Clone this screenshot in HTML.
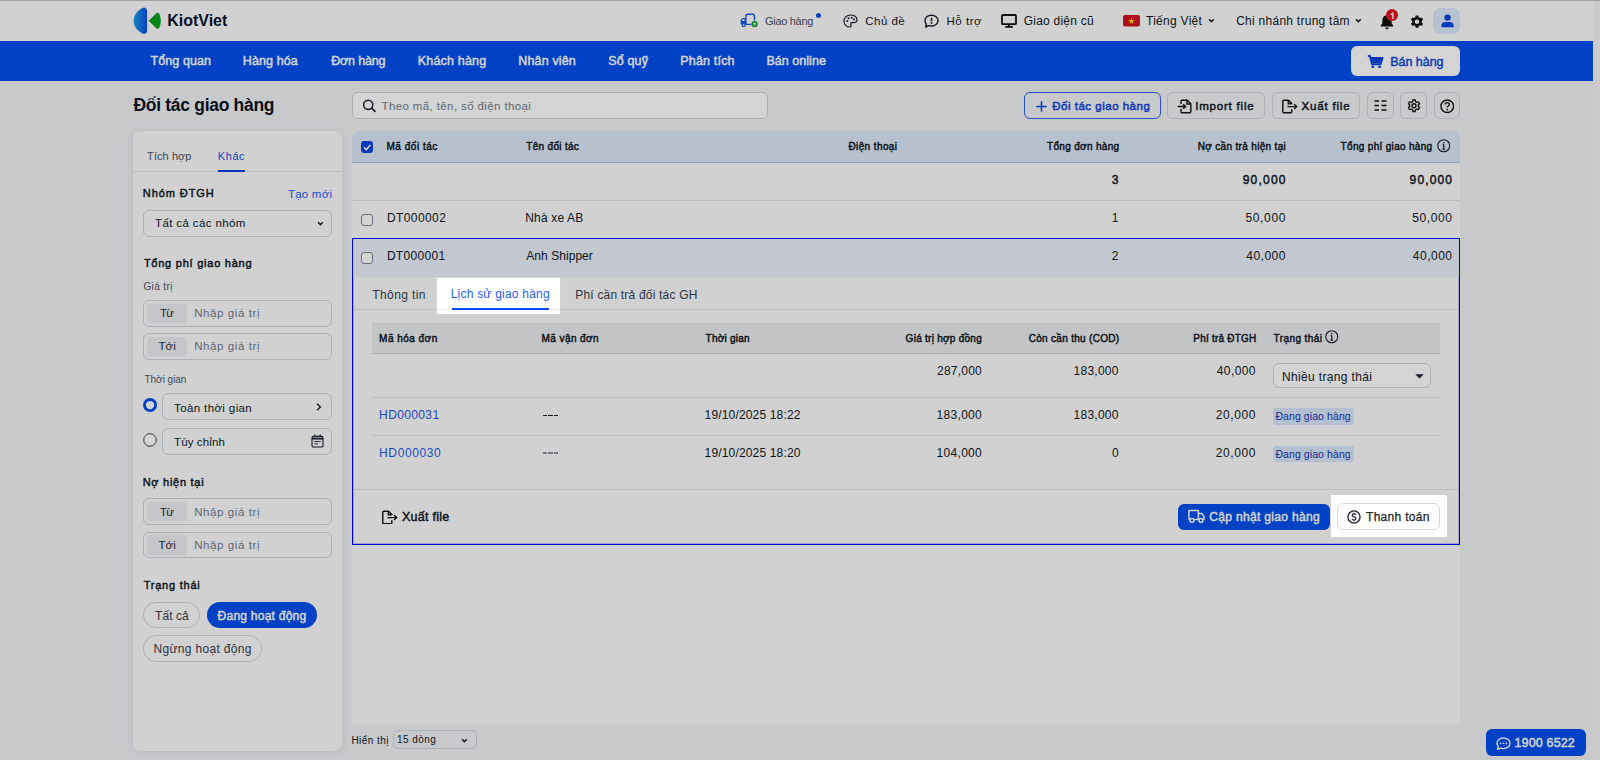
<!DOCTYPE html>
<html><head><meta charset="utf-8">
<style>
*{box-sizing:border-box;margin:0;padding:0}
html,body{width:1600px;height:760px;overflow:hidden}
body{font-family:"Liberation Sans",sans-serif;background:#f1f2f5;position:relative}
.a{position:absolute}
.t{white-space:nowrap;line-height:1}
.ov{position:absolute;left:0;top:0;width:1600px;height:760px;background:rgba(0,0,0,0.17);z-index:50}
.top{position:absolute;left:0;top:0;width:1600px;height:760px;z-index:60}
</style></head><body>
<div class="a" style="left:0px;top:0px;width:1593px;height:41px;background:#fcfcfc;border-top:1px solid #c3c5c3"></div><div class="a" style="left:1593px;top:0px;width:7px;height:760px;background:#f5f5f5"></div><div class="a" style="left:0px;top:41px;width:1593px;height:39.5px;background:#004fee"></div><svg class="a" style="left:133px;top:7px;" width="28" height="28" viewBox="0 0 28 28" fill="none"><defs><linearGradient id="lg" x1="0" y1="0" x2="1" y2="0"><stop offset="0" stop-color="#1fa3e6"/><stop offset="1" stop-color="#0a4fe6"/></linearGradient></defs>
<path d="M10.8,0.5 C13,0.5 14.1,2.2 14.1,4.6 L14.1,22.9 C14.1,25.3 13,27 10.8,27 C4.6,24.6 0.6,19.6 0.6,13.8 C0.6,8 4.6,2.9 10.8,0.5 Z" fill="url(#lg)"/>
<path d="M15.6,13.8 L23.2,6.4 C24.2,5.4 25.6,5.6 26.3,6.9 C27.4,9 27.8,11.4 27.8,13.8 C27.8,16.2 27.4,18.6 26.3,20.7 C25.6,22 24.2,22.2 23.2,21.2 Z" fill="#0aa01e"/></svg><svg class="a" style="left:736px;top:8px;" width="30" height="24" viewBox="0 0 30 24" fill="none"><path d="M9.9,16.4 L9.9,8.2 C9.9,6.9 10.6,6.3 11.8,6.3 L16.6,6.3 C17.8,6.3 18.5,6.9 18.5,8.2 L18.5,12.6 M9.9,16.4 L15.2,16.4" stroke="#1554e0" stroke-width="1.4" stroke-linejoin="round" fill="none"/>
<path d="M4.7,16.6 L4.7,12.3 L6.5,10.1 L9.9,10.1 L9.9,16.6 Z" fill="#1554e0"/><rect x="6.3" y="11.2" width="2.3" height="1.8" fill="#fff"/><circle cx="7.7" cy="17.2" r="1.5" stroke="#1554e0" stroke-width="1.2" fill="#fff"/>
<circle cx="18.6" cy="16.1" r="3.2" fill="#13a02e"/><path d="M17,15.3 L20.2,15.3 M17.3,16.9 L19.9,16.9" stroke="#fff" stroke-width="0.9"/></svg><svg class="a" style="left:816px;top:12.5px;" width="5" height="5" viewBox="0 0 5 5" fill="none"><circle cx="2.5" cy="2.5" r="2.5" fill="#0a4fe6"/></svg><svg class="a" style="left:843px;top:14px;" width="15" height="14" viewBox="0 0 15 14" fill="none"><path d="M7.5,1 C3.6,1 1,3.9 1,7.2 C1,10.4 3.6,13 6.8,13 C7.8,13 8.2,12.4 8.2,11.7 C8.2,11 7.6,10.6 7.6,9.9 C7.6,9.1 8.2,8.6 9,8.6 L10.6,8.6 C12.5,8.6 14,7.2 14,5.4 C14,2.9 11.2,1 7.5,1 Z" stroke="#1a1f2b" stroke-width="1.2"/>
<circle cx="4.3" cy="7" r="1" fill="#1a1f2b"/><circle cx="5.6" cy="4.2" r="1" fill="#1a1f2b"/><circle cx="8.8" cy="3.8" r="1" fill="#1a1f2b"/><circle cx="11" cy="5.6" r="1" fill="#1a1f2b"/></svg><svg class="a" style="left:924px;top:14px;" width="15" height="14" viewBox="0 0 15 14" fill="none"><path d="M7.5,1.2 C11.2,1.2 14,3.6 14,6.6 C14,9.6 11.2,12 7.5,12 C6.6,12 5.8,11.9 5,11.6 L1.6,13 L2.4,10.2 C1.5,9.2 1,8 1,6.6 C1,3.6 3.8,1.2 7.5,1.2 Z" stroke="#1a1f2b" stroke-width="1.4" stroke-linejoin="round"/>
<path d="M7.5,3.8 L7.5,7.2" stroke="#1a1f2b" stroke-width="1.5"/><circle cx="7.5" cy="9" r="0.9" fill="#1a1f2b"/></svg><svg class="a" style="left:1000.5px;top:14px;" width="16" height="14" viewBox="0 0 16 14" fill="none"><rect x="1" y="1" width="14" height="9.2" rx="1" stroke="#111" stroke-width="1.8"/><path d="M8,10.5 L8,12.3 M4.2,12.8 L11.8,12.8" stroke="#111" stroke-width="1.8"/></svg><svg class="a" style="left:1122.5px;top:15px;" width="17" height="11.5" viewBox="0 0 17 11.5" fill="none"><rect x="0" y="0" width="17" height="11.5" rx="2" fill="#d2141c"/><path d="M8.5,2.6 L9.3,5 L11.8,5 L9.8,6.5 L10.5,8.9 L8.5,7.4 L6.5,8.9 L7.2,6.5 L5.2,5 L7.7,5 Z" fill="#ffd800"/></svg><svg class="a" style="left:1207.8px;top:18.2px;" width="7" height="5" viewBox="0 0 7 5" fill="none"><path d="M1,1.2 L3.4,3.6 L5.8,1.2" stroke="#1a1f2b" stroke-width="1.5" fill="none"/></svg><svg class="a" style="left:1355px;top:18.2px;" width="7" height="5" viewBox="0 0 7 5" fill="none"><path d="M1,1.2 L3.4,3.6 L5.8,1.2" stroke="#1a1f2b" stroke-width="1.5" fill="none"/></svg><svg class="a" style="left:1379.5px;top:13.5px;" width="14" height="16" viewBox="0 0 14 16" fill="none"><path d="M7,1.2 C4.2,1.2 2.4,3.4 2.4,6 L2.4,9.2 L0.8,11.6 L0.8,12.6 L13.2,12.6 L13.2,11.6 L11.6,9.2 L11.6,6 C11.6,3.4 9.8,1.2 7,1.2 Z" fill="#111"/><path d="M5.2,13.6 C5.4,14.6 6.1,15.2 7,15.2 C7.9,15.2 8.6,14.6 8.8,13.6 Z" fill="#111"/></svg><svg class="a" style="left:1386px;top:9.2px;" width="12" height="12" viewBox="0 0 12 12" fill="none"><circle cx="6" cy="6" r="6" fill="#e3141e"/></svg><svg class="a" style="left:1390px;top:11.5px;" width="5" height="7.5" viewBox="0 0 5 7.5" fill="none"><path d="M0.6,2 L2.6,0.6 L3.6,0.6 L3.6,7.2 L2.2,7.2 L2.2,2.4 L0.6,3.2 Z" fill="#fff"/></svg><svg class="a" style="left:1409.5px;top:15.3px;" width="14" height="13" viewBox="0 0 14 13" fill="none"><path fill="#111" fill-rule="evenodd" d="M5.7,0.5 L8.3,0.5 L8.7,2.3 C9.2,2.5 9.6,2.7 10,3 L11.8,2.4 L13.1,4.6 L11.7,5.9 C11.8,6.4 11.8,6.9 11.7,7.4 L13.1,8.7 L11.8,10.9 L10,10.3 C9.6,10.6 9.2,10.8 8.7,11 L8.3,12.8 L5.7,12.8 L5.3,11 C4.8,10.8 4.4,10.6 4,10.3 L2.2,10.9 L0.9,8.7 L2.3,7.4 C2.2,6.9 2.2,6.4 2.3,5.9 L0.9,4.6 L2.2,2.4 L4,3 C4.4,2.7 4.8,2.5 5.3,2.3 Z M7,4.4 A2.25,2.25 0 1 0 7,8.9 A2.25,2.25 0 1 0 7,4.4 Z"/></svg><div class="a" style="left:1433px;top:7.5px;width:26.5px;height:26.5px;background:#dde9fb;border-radius:7px"></div><svg class="a" style="left:1440.5px;top:14px;" width="13" height="13.5" viewBox="0 0 13 13.5" fill="none"><circle cx="6.5" cy="3.6" r="3.2" fill="#0b45e0"/><path d="M0.4,13.3 L0.4,11.4 C0.4,9.4 2,7.9 4,7.9 L9,7.9 C11,7.9 12.6,9.4 12.6,11.4 L12.6,13.3 Z" fill="#0b45e0"/></svg><div class="a" style="left:1351px;top:46px;width:108.5px;height:29.6px;background:#fff;border-radius:6px"></div><svg class="a" style="left:1366.5px;top:54.5px;" width="17" height="13.5" viewBox="0 0 17 13.5" fill="none"><path d="M0.8,1 L3,1 L5,9.2 L13.6,9.2 L15.6,3 L3.8,3" stroke="#0b45e0" stroke-width="1.9" stroke-linejoin="round" fill="none"/><path d="M4.2,3 L14.6,3 L13.2,8.2 L5.4,8.2 Z" fill="#0b45e0"/><circle cx="5.9" cy="12" r="1.4" fill="#0b45e0"/><circle cx="12.6" cy="12" r="1.4" fill="#0b45e0"/></svg><div class="a" style="left:352.4px;top:92.2px;width:415.6px;height:26.4px;background:#fff;border:1px solid #cfd4dc;border-radius:6px"></div><svg class="a" style="left:361.5px;top:99px;" width="15" height="14" viewBox="0 0 15 14" fill="none"><circle cx="6.2" cy="5.8" r="4.6" stroke="#1a1f2b" stroke-width="1.5"/><path d="M9.6,9.2 L13,12.4" stroke="#1a1f2b" stroke-width="1.6" stroke-linecap="round"/></svg><div class="a" style="left:1024px;top:92.2px;width:137px;height:26.5px;border:1px solid #2f63ee;border-radius:6px"></div><svg class="a" style="left:1035.5px;top:100.5px;" width="11" height="11" viewBox="0 0 11 11" fill="none"><path d="M5.5,0.3 L5.5,10.7 M0.3,5.5 L10.7,5.5" stroke="#0a44f0" stroke-width="1.5"/></svg><div class="a" style="left:1167px;top:92.2px;width:97.5px;height:26.5px;border:1px solid #cfd4dc;border-radius:6px"></div><svg class="a" style="left:1176.8px;top:98.5px;" width="15" height="15" viewBox="0 0 15 15" fill="none"><path d="M4,5 L4,2.2 C4,1.6 4.4,1.2 5,1.2 L10.3,1.2 L13.8,4.7 L13.8,12.8 C13.8,13.4 13.4,13.8 12.8,13.8 L5,13.8 C4.4,13.8 4,13.4 4,12.8 L4,10" stroke="#111" stroke-width="1.4" stroke-linejoin="round"/><path d="M10,1.2 L10,5 L13.8,5" stroke="#111" stroke-width="1.4"/><path d="M0.8,7.5 L8.5,7.5 M6.2,5.2 L8.6,7.5 L6.2,9.8" stroke="#111" stroke-width="1.4"/></svg><div class="a" style="left:1272px;top:92.2px;width:87.5px;height:26.5px;border:1px solid #cfd4dc;border-radius:6px"></div><svg class="a" style="left:1282px;top:98.5px;" width="16" height="15" viewBox="0 0 16 15" fill="none"><path d="M9.8,10.3 L9.8,12.8 C9.8,13.4 9.4,13.8 8.8,13.8 L1.8,13.8 C1.2,13.8 0.8,13.4 0.8,12.8 L0.8,2.2 C0.8,1.6 1.2,1.2 1.8,1.2 L6.5,1.2 L9.8,4.5 L9.8,5" stroke="#111" stroke-width="1.4" stroke-linejoin="round"/><path d="M6.3,1.2 L6.3,4.8 L9.8,4.8" stroke="#111" stroke-width="1.4"/><path d="M5.5,7.6 L14.5,7.6 M12.2,5.3 L14.6,7.6 L12.2,9.9" stroke="#111" stroke-width="1.4"/></svg><div class="a" style="left:1367px;top:92.2px;width:26.5px;height:26.5px;border:1px solid #cfd4dc;border-radius:6px"></div><div class="a" style="left:1400.3px;top:92.2px;width:26.5px;height:26.5px;border:1px solid #cfd4dc;border-radius:6px"></div><div class="a" style="left:1433.5px;top:92.2px;width:26.5px;height:26.5px;border:1px solid #cfd4dc;border-radius:6px"></div><svg class="a" style="left:1373.5px;top:100px;" width="13" height="11" viewBox="0 0 13 11" fill="none"><path d="M0.5,1 L5,1 M7.5,1 L12.5,1 M0.5,5.5 L5,5.5 M7.5,5.5 L12.5,5.5 M0.5,10 L5,10 M7.5,10 L12.5,10" stroke="#111" stroke-width="1.5"/></svg><svg class="a" style="left:1406.5px;top:99px;" width="14" height="14" viewBox="0 0 14 14" fill="none"><path fill="none" stroke="#111" stroke-width="1.3" d="M5.9,1 L8.1,1 L8.5,2.7 C9,2.9 9.4,3.1 9.8,3.4 L11.5,2.9 L12.6,4.8 L11.3,6 C11.4,6.5 11.4,7 11.3,7.5 L12.6,8.7 L11.5,10.6 L9.8,10.1 C9.4,10.4 9,10.6 8.5,10.8 L8.1,12.5 L5.9,12.5 L5.5,10.8 C5,10.6 4.6,10.4 4.2,10.1 L2.5,10.6 L1.4,8.7 L2.7,7.5 C2.6,7 2.6,6.5 2.7,6 L1.4,4.8 L2.5,2.9 L4.2,3.4 C4.6,3.1 5,2.9 5.5,2.7 Z"/><circle cx="7" cy="6.75" r="2" stroke="#111" stroke-width="1.3"/></svg><svg class="a" style="left:1439.5px;top:98.7px;" width="14.5" height="14.5" viewBox="0 0 14.5 14.5" fill="none"><circle cx="7.25" cy="7.25" r="6.3" stroke="#111" stroke-width="1.4"/><path d="M5.2,5.6 C5.2,4.4 6.1,3.6 7.25,3.6 C8.4,3.6 9.3,4.4 9.3,5.5 C9.3,6.9 7.3,7 7.3,8.6" stroke="#111" stroke-width="1.4" fill="none"/><circle cx="7.3" cy="10.6" r="0.85" fill="#111"/></svg><div class="a" style="left:133px;top:131px;width:208.5px;height:620px;background:#fcfcfc;border-radius:8px;box-shadow:0 1px 8px rgba(0,0,0,.09)"></div><div class="a" style="left:133px;top:171px;width:208.5px;height:1px;background:#e3e6ea"></div><div class="a" style="left:218.4px;top:170px;width:26.7px;height:2px;background:#0a3fe0"></div><div class="a" style="left:143.2px;top:210.4px;width:188.4px;height:26.3px;border:1px solid #cfd4dc;border-radius:6px"></div><svg class="a" style="left:316.5px;top:220.5px;" width="7" height="5" viewBox="0 0 7 5" fill="none"><path d="M1,1.2 L3.4,3.6 L5.8,1.2" stroke="#1a1f2b" stroke-width="1.5" fill="none"/></svg><div class="a" style="left:143.4px;top:300.3px;width:188.4px;height:26.6px;border:1px solid #cfd4dc;border-radius:6px"></div><div class="a" style="left:147px;top:303.5px;width:40.2px;height:19.6px;background:#eceef2;border-radius:3px"></div><div class="a" style="left:143.4px;top:333.3px;width:188.4px;height:26.6px;border:1px solid #cfd4dc;border-radius:6px"></div><div class="a" style="left:147px;top:336.5px;width:40.2px;height:19.6px;background:#eceef2;border-radius:3px"></div><svg class="a" style="left:143px;top:398px;" width="14.5" height="14.5" viewBox="0 0 14.5 14.5" fill="none"><circle cx="7.05" cy="7.05" r="5.6" stroke="#004fee" stroke-width="2.9" fill="#fff"/></svg><div class="a" style="left:162.4px;top:393.3px;width:169.2px;height:26.4px;border:1px solid #cfd4dc;border-radius:6px"></div><svg class="a" style="left:316px;top:403px;" width="6" height="8" viewBox="0 0 6 8" fill="none"><path d="M1,0.8 L4.4,4 L1,7.2" stroke="#1a1f2b" stroke-width="1.4" fill="none"/></svg><svg class="a" style="left:143px;top:432.8px;" width="14.5" height="14.5" viewBox="0 0 14.5 14.5" fill="none"><circle cx="7" cy="7" r="6.3" stroke="#3b4250" stroke-width="1" fill="#fff"/></svg><div class="a" style="left:162.4px;top:428.2px;width:169.2px;height:26.4px;border:1px solid #cfd4dc;border-radius:6px"></div><svg class="a" style="left:310.5px;top:433.8px;" width="13" height="14" viewBox="0 0 13 14" fill="none"><rect x="1" y="2.4" width="11" height="10.6" rx="1.3" stroke="#1a1f2b" stroke-width="1.1"/><path d="M1,4.6 L12,4.6" stroke="#1a1f2b" stroke-width="1.9"/><path d="M3.8,0.6 L3.8,3 M9.2,0.6 L9.2,3" stroke="#1a1f2b" stroke-width="1.2"/><path d="M3.3,7.6 L9.7,7.6 M3.3,9.9 L7,9.9" stroke="#1a1f2b" stroke-width="0.9"/></svg><div class="a" style="left:143.4px;top:498.3px;width:188.4px;height:26.6px;border:1px solid #cfd4dc;border-radius:6px"></div><div class="a" style="left:147px;top:501.5px;width:40.2px;height:19.6px;background:#eceef2;border-radius:3px"></div><div class="a" style="left:143.4px;top:531.8px;width:188.4px;height:26.6px;border:1px solid #cfd4dc;border-radius:6px"></div><div class="a" style="left:147px;top:535.0px;width:40.2px;height:19.6px;background:#eceef2;border-radius:3px"></div><div class="a" style="left:143.2px;top:601.6px;width:56.6px;height:26.4px;border:1px solid #cfd4dc;border-radius:13.2px"></div><div class="a" style="left:206.8px;top:601.6px;width:109.8px;height:26.4px;background:#004fee;border-radius:13.2px"></div><div class="a" style="left:143.2px;top:635.3px;width:118.4px;height:26.4px;border:1px solid #cfd4dc;border-radius:13.2px"></div><div class="a" style="left:352px;top:131px;width:1108px;height:593.5px;background:#fcfcfc;border-radius:8px 8px 0 0"></div><div class="a" style="left:352px;top:131px;width:1108px;height:32px;background:#dde8f8;border-radius:8px 8px 0 0;border-bottom:1px solid #a9c4f0"></div><div class="a" style="left:360.7px;top:140.7px;width:12.3px;height:12.3px;background:#0b45e0;border-radius:3px"></div><svg class="a" style="left:360.7px;top:140.7px;" width="12.3" height="12.3" viewBox="0 0 12.3 12.3" fill="none"><path d="M3,6.3 L5.2,8.5 L9.5,4" stroke="#fff" stroke-width="1.6" fill="none"/></svg><svg class="a" style="left:1436.8px;top:139px;" width="13.5" height="13.5" viewBox="0 0 13.5 13.5" fill="none"><circle cx="6.75" cy="6.75" r="6" stroke="#1a1f2b" stroke-width="1.1"/><path d="M6.75,5.6 L6.75,10.2 M5.4,10.2 L8.1,10.2 M5.6,5.6 L6.75,5.6" stroke="#1a1f2b" stroke-width="1.2"/><circle cx="6.75" cy="3.8" r="0.8" fill="#1a1f2b"/></svg><div class="a" style="left:352px;top:200px;width:1108px;height:1px;background:#e3e6ea"></div><div class="a" style="left:360.6px;top:213.7px;width:12.4px;height:12.4px;border:1px solid #7b8491;border-radius:3px;background:#fff"></div><div class="a" style="left:352px;top:237.5px;width:1107.5px;height:307.3px;border:1px solid #0000ff;box-shadow:inset 0 0 0 1px rgba(0,0,255,.22)"></div><div class="a" style="left:353px;top:238.5px;width:1106px;height:38px;background:#ebf0f9"></div><div class="a" style="left:360.6px;top:252.1px;width:12.4px;height:12.4px;border:1px solid #7b8491;border-radius:3px;background:#fff"></div><div class="a" style="left:354px;top:309px;width:1104px;height:1px;background:#dfe3e8"></div><div class="a" style="left:371.8px;top:323.2px;width:1067.8px;height:30.4px;background:#eaecef;border-bottom:1px solid #cfd3d9"></div><svg class="a" style="left:1325px;top:330px;" width="13.5" height="13.5" viewBox="0 0 13.5 13.5" fill="none"><circle cx="6.75" cy="6.75" r="6" stroke="#1a1f2b" stroke-width="1.1"/><path d="M6.75,5.6 L6.75,10.2 M5.4,10.2 L8.1,10.2 M5.6,5.6 L6.75,5.6" stroke="#1a1f2b" stroke-width="1.2"/><circle cx="6.75" cy="3.8" r="0.8" fill="#1a1f2b"/></svg><div class="a" style="left:1272.6px;top:362.6px;width:158.7px;height:25.6px;background:#fff;border:1px solid #cfd4dc;border-radius:6px"></div><svg class="a" style="left:1414.5px;top:373.5px;" width="9" height="5" viewBox="0 0 9 5" fill="none"><path d="M0.3,0.3 L8.7,0.3 L4.5,4.6 Z" fill="#1a1f2b"/></svg><div class="a" style="left:371.8px;top:397.3px;width:1067.8px;height:1px;background:#e3e6ea"></div><div class="a" style="left:543px;top:414.6px;width:14.8px;height:1.3px;background:repeating-linear-gradient(90deg,#1a1f2b 0 4.3px,transparent 4.3px 5.25px)"></div><div class="a" style="left:1272.6px;top:408px;width:81.2px;height:16.5px;background:#d9e6fb;border-radius:3px"></div><div class="a" style="left:371.8px;top:435px;width:1067.8px;height:1px;background:#e3e6ea"></div><div class="a" style="left:543px;top:452.4px;width:14.8px;height:1.3px;background:repeating-linear-gradient(90deg,#8a919c 0 4.3px,transparent 4.3px 5.25px)"></div><div class="a" style="left:1272.6px;top:446px;width:81.2px;height:16.3px;background:#d9e6fb;border-radius:3px"></div><div class="a" style="left:354px;top:489.2px;width:1104px;height:1px;background:#dfe3e8"></div><svg class="a" style="left:381.5px;top:509.5px;" width="16" height="14.5" viewBox="0 0 16 14.5" fill="none"><path d="M9.8,10.3 L9.8,12.8 C9.8,13.4 9.4,13.8 8.8,13.8 L1.8,13.8 C1.2,13.8 0.8,13.4 0.8,12.8 L0.8,2.2 C0.8,1.6 1.2,1.2 1.8,1.2 L6.5,1.2 L9.8,4.5 L9.8,5" stroke="#111" stroke-width="1.4" stroke-linejoin="round"/><path d="M6.3,1.2 L6.3,4.8 L9.8,4.8" stroke="#111" stroke-width="1.4"/><path d="M5.5,7.6 L14.5,7.6 M12.2,5.3 L14.6,7.6 L12.2,9.9" stroke="#111" stroke-width="1.4"/></svg><div class="a" style="left:1178px;top:503.6px;width:151.7px;height:26.3px;background:#004fee;border-radius:6px"></div><svg class="a" style="left:1188px;top:509.3px;" width="17" height="14" viewBox="0 0 17 14" fill="none"><path d="M1,1.6 L10.4,1.6 L10.4,10.4 L1,10.4 Z M10.4,4.6 L13.6,4.6 L16,7.4 L16,10.4 L10.4,10.4" stroke="#fff" stroke-width="1.5" stroke-linejoin="round" fill="none"/><circle cx="4" cy="11.4" r="1.9" stroke="#fff" stroke-width="1.4" fill="#004fee"/><circle cx="13" cy="11.4" r="1.9" stroke="#fff" stroke-width="1.4" fill="#004fee"/></svg><div class="a" style="left:393px;top:730.2px;width:83.6px;height:19.3px;border:1px solid #cfd4dc;border-radius:5px"></div><svg class="a" style="left:461px;top:738px;" width="7" height="5" viewBox="0 0 7 5" fill="none"><path d="M1,1.2 L3.4,3.6 L5.8,1.2" stroke="#1a1f2b" stroke-width="1.5" fill="none"/></svg><div class="a" style="left:1486px;top:729px;width:99.7px;height:26.5px;background:#004fee;border-radius:6px"></div><svg class="a" style="left:1496px;top:736.5px;" width="15" height="13" viewBox="0 0 15 13" fill="none"><path d="M7.5,1 C11.1,1 14,3.4 14,6.3 C14,9.2 11.1,11.6 7.5,11.6 C6.6,11.6 5.8,11.4 5,11.1 L1.6,12.4 L2.3,9.7 C1.5,8.8 1,7.6 1,6.3 C1,3.4 3.9,1 7.5,1 Z" stroke="#fff" stroke-width="1.4" fill="none" stroke-linejoin="round"/><circle cx="4.6" cy="6.3" r="0.9" fill="#fff"/><circle cx="7.5" cy="6.3" r="0.9" fill="#fff"/><circle cx="10.4" cy="6.3" r="0.9" fill="#fff"/></svg><div class="a" style="left:1593px;top:0px;width:7px;height:1px;background:#c3c5c3"></div>
<div class="a t" style="left:167.30px;top:13.00px;font-size:16px;font-weight:700;color:#0b1530;letter-spacing:-0.029px;">KiotViet</div><div class="a t" style="left:765.00px;top:15.50px;font-size:11px;font-weight:400;color:#4b5160;letter-spacing:-0.300px;">Giao hàng</div><div class="a t" style="left:865.20px;top:16.10px;font-size:11.5px;font-weight:400;color:#0f1824;letter-spacing:0.500px;">Chủ đề</div><div class="a t" style="left:946.40px;top:16.10px;font-size:11.5px;font-weight:400;color:#0f1824;letter-spacing:0.540px;">Hỗ trợ</div><div class="a t" style="left:1023.80px;top:14.80px;font-size:12px;font-weight:400;color:#0f1824;letter-spacing:0.218px;">Giao diện cũ</div><div class="a t" style="left:1146.00px;top:14.80px;font-size:12px;font-weight:400;color:#0f1824;letter-spacing:0.278px;">Tiếng Việt</div><div class="a t" style="left:1236.20px;top:14.80px;font-size:12px;font-weight:400;color:#0f1824;letter-spacing:0.261px;">Chi nhánh trung tâm</div><div class="a t" style="left:150.50px;top:55.00px;font-size:12.5px;font-weight:400;color:#fff;-webkit-text-stroke:0.45px #fff;letter-spacing:0.094px;">Tổng quan</div><div class="a t" style="left:242.75px;top:55.00px;font-size:12.5px;font-weight:400;color:#fff;-webkit-text-stroke:0.45px #fff;letter-spacing:0.107px;">Hàng hóa</div><div class="a t" style="left:331.25px;top:55.00px;font-size:12.5px;font-weight:400;color:#fff;-webkit-text-stroke:0.45px #fff;letter-spacing:-0.179px;">Đơn hàng</div><div class="a t" style="left:417.75px;top:55.00px;font-size:12.5px;font-weight:400;color:#fff;-webkit-text-stroke:0.45px #fff;letter-spacing:0.194px;">Khách hàng</div><div class="a t" style="left:518.25px;top:55.00px;font-size:12.5px;font-weight:400;color:#fff;-webkit-text-stroke:0.45px #fff;letter-spacing:0.156px;">Nhân viên</div><div class="a t" style="left:608.25px;top:55.00px;font-size:12.5px;font-weight:400;color:#fff;-webkit-text-stroke:0.45px #fff;letter-spacing:0.150px;">Sổ quỹ</div><div class="a t" style="left:680.25px;top:55.00px;font-size:12.5px;font-weight:400;color:#fff;-webkit-text-stroke:0.45px #fff;letter-spacing:0.188px;">Phân tích</div><div class="a t" style="left:766.50px;top:55.00px;font-size:12.5px;font-weight:400;color:#fff;-webkit-text-stroke:0.45px #fff;letter-spacing:0.028px;">Bán online</div><div class="a t" style="left:1390.25px;top:55.50px;font-size:12.5px;font-weight:400;color:#1048d8;-webkit-text-stroke:0.45px #1048d8;letter-spacing:-0.036px;">Bán hàng</div><div class="a t" style="left:133.40px;top:97.40px;font-size:17.5px;font-weight:700;color:#0b1220;letter-spacing:-0.294px;">Đối tác giao hàng</div><div class="a t" style="left:381.50px;top:100.70px;font-size:11.5px;font-weight:400;color:#727d8c;letter-spacing:0.385px;">Theo mã, tên, số điện thoại</div><div class="a t" style="left:1052.30px;top:101.00px;font-size:11.5px;font-weight:400;color:#0a3fe0;-webkit-text-stroke:0.45px #0a3fe0;letter-spacing:0.500px;">Đối tác giao hàng</div><div class="a t" style="left:1195.20px;top:101.00px;font-size:11.5px;font-weight:400;color:#111827;-webkit-text-stroke:0.45px #111827;letter-spacing:0.800px;">Import file</div><div class="a t" style="left:1301.60px;top:101.00px;font-size:11.5px;font-weight:400;color:#111827;-webkit-text-stroke:0.45px #111827;letter-spacing:0.800px;">Xuất file</div><div class="a t" style="left:147.10px;top:151.00px;font-size:11px;font-weight:400;color:#4b5563;letter-spacing:0.071px;">Tích hợp</div><div class="a t" style="left:217.80px;top:151.00px;font-size:11px;font-weight:400;color:#1552e8;letter-spacing:0.567px;">Khác</div><div class="a t" style="left:142.80px;top:188.20px;font-size:11px;font-weight:400;color:#0f1824;-webkit-text-stroke:0.45px #0f1824;letter-spacing:0.925px;">Nhóm ĐTGH</div><div class="a t" style="left:287.90px;top:188.50px;font-size:11.5px;font-weight:400;color:#1a5ef2;letter-spacing:0.233px;">Tạo mới</div><div class="a t" style="left:155.00px;top:218.10px;font-size:11.5px;font-weight:400;color:#0f1824;letter-spacing:0.386px;">Tất cả các nhóm</div><div class="a t" style="left:143.90px;top:258.00px;font-size:11px;font-weight:400;color:#0f1824;-webkit-text-stroke:0.45px #0f1824;letter-spacing:0.759px;">Tổng phí giao hàng</div><div class="a t" style="left:143.40px;top:282.30px;font-size:10px;font-weight:400;color:#4b5563;letter-spacing:0.400px;">Giá trị</div><div class="a t" style="left:160.00px;top:308.00px;font-size:11.5px;font-weight:400;color:#1f2937;letter-spacing:-0.800px;">Từ</div><div class="a t" style="left:194.20px;top:308.10px;font-size:11.5px;font-weight:400;color:#727d8c;letter-spacing:0.591px;">Nhập giá trị</div><div class="a t" style="left:158.40px;top:341.30px;font-size:11.5px;font-weight:400;color:#1f2937;letter-spacing:0.200px;">Tới</div><div class="a t" style="left:194.20px;top:341.30px;font-size:11.5px;font-weight:400;color:#727d8c;letter-spacing:0.591px;">Nhập giá trị</div><div class="a t" style="left:144.50px;top:375.20px;font-size:10px;font-weight:400;color:#4b5563;letter-spacing:-0.025px;">Thời gian</div><div class="a t" style="left:174.00px;top:402.80px;font-size:11.5px;font-weight:400;color:#0f1824;letter-spacing:0.385px;">Toàn thời gian</div><div class="a t" style="left:174.00px;top:437.30px;font-size:11.5px;font-weight:400;color:#0f1824;letter-spacing:0.125px;">Tùy chỉnh</div><div class="a t" style="left:142.70px;top:477.30px;font-size:11px;font-weight:400;color:#0f1824;-webkit-text-stroke:0.45px #0f1824;letter-spacing:0.720px;">Nợ hiện tại</div><div class="a t" style="left:160.00px;top:507.00px;font-size:11.5px;font-weight:400;color:#1f2937;letter-spacing:-0.800px;">Từ</div><div class="a t" style="left:194.20px;top:507.00px;font-size:11.5px;font-weight:400;color:#727d8c;letter-spacing:0.591px;">Nhập giá trị</div><div class="a t" style="left:158.40px;top:540.00px;font-size:11.5px;font-weight:400;color:#1f2937;letter-spacing:0.200px;">Tới</div><div class="a t" style="left:194.20px;top:540.00px;font-size:11.5px;font-weight:400;color:#727d8c;letter-spacing:0.591px;">Nhập giá trị</div><div class="a t" style="left:143.70px;top:580.00px;font-size:11px;font-weight:400;color:#0f1824;-webkit-text-stroke:0.45px #0f1824;letter-spacing:0.778px;">Trạng thái</div><div class="a t" style="left:155.00px;top:609.50px;font-size:12px;font-weight:400;color:#374151;letter-spacing:0.080px;">Tất cả</div><div class="a t" style="left:217.60px;top:609.50px;font-size:12px;font-weight:400;color:#fff;-webkit-text-stroke:0.45px #fff;letter-spacing:0.246px;">Đang hoạt động</div><div class="a t" style="left:153.50px;top:642.90px;font-size:12px;font-weight:400;color:#374151;letter-spacing:0.321px;">Ngừng hoạt động</div><div class="a t" style="left:386.50px;top:142.20px;font-size:10px;font-weight:400;color:#0f1824;-webkit-text-stroke:0.45px #0f1824;letter-spacing:0.522px;">Mã đối tác</div><div class="a t" style="left:526.30px;top:142.20px;font-size:10px;font-weight:400;color:#0f1824;-webkit-text-stroke:0.45px #0f1824;letter-spacing:0.310px;">Tên đối tác</div><div class="a t" style="left:848.40px;top:142.20px;font-size:10px;font-weight:400;color:#0f1824;-webkit-text-stroke:0.45px #0f1824;letter-spacing:0.400px;">Điện thoại</div><div class="a t" style="left:1047.00px;top:142.20px;font-size:10px;font-weight:400;color:#0f1824;-webkit-text-stroke:0.45px #0f1824;letter-spacing:0.317px;">Tổng đơn hàng</div><div class="a t" style="left:1197.70px;top:142.20px;font-size:10px;font-weight:400;color:#0f1824;-webkit-text-stroke:0.45px #0f1824;letter-spacing:0.333px;">Nợ cần trả hiện tại</div><div class="a t" style="left:1340.60px;top:142.20px;font-size:10px;font-weight:400;color:#0f1824;-webkit-text-stroke:0.45px #0f1824;letter-spacing:0.318px;">Tổng phí giao hàng</div><div class="a t" style="left:1111.80px;top:174.00px;font-size:12px;font-weight:400;color:#0f1824;-webkit-text-stroke:0.45px #0f1824;">3</div><div class="a t" style="left:1242.75px;top:174.00px;font-size:12px;font-weight:400;color:#0f1824;-webkit-text-stroke:0.45px #0f1824;letter-spacing:1.200px;">90,000</div><div class="a t" style="left:1409.60px;top:174.00px;font-size:12px;font-weight:400;color:#0f1824;-webkit-text-stroke:0.45px #0f1824;letter-spacing:1.140px;">90,000</div><div class="a t" style="left:386.90px;top:212.10px;font-size:12px;font-weight:400;color:#0f1824;letter-spacing:0.414px;">DT000002</div><div class="a t" style="left:525.30px;top:212.10px;font-size:12px;font-weight:400;color:#0f1824;letter-spacing:0.150px;">Nhà xe AB</div><div class="a t" style="left:1111.80px;top:212.10px;font-size:12px;font-weight:400;color:#0f1824;">1</div><div class="a t" style="left:1245.45px;top:212.10px;font-size:12px;font-weight:400;color:#0f1824;letter-spacing:0.660px;">50,000</div><div class="a t" style="left:1412.20px;top:212.10px;font-size:12px;font-weight:400;color:#0f1824;letter-spacing:0.620px;">50,000</div><div class="a t" style="left:386.90px;top:249.80px;font-size:12px;font-weight:400;color:#0f1824;letter-spacing:0.314px;">DT000001</div><div class="a t" style="left:526.30px;top:249.80px;font-size:12px;font-weight:400;color:#0f1824;letter-spacing:0.050px;">Anh Shipper</div><div class="a t" style="left:1111.80px;top:249.80px;font-size:12px;font-weight:400;color:#0f1824;">2</div><div class="a t" style="left:1246.25px;top:249.80px;font-size:12px;font-weight:400;color:#0f1824;letter-spacing:0.500px;">40,000</div><div class="a t" style="left:1412.80px;top:249.80px;font-size:12px;font-weight:400;color:#0f1824;letter-spacing:0.500px;">40,000</div><div class="a t" style="left:372.25px;top:288.60px;font-size:12px;font-weight:400;color:#374151;letter-spacing:0.406px;">Thông tin</div><div class="a t" style="left:575.30px;top:288.60px;font-size:12px;font-weight:400;color:#374151;letter-spacing:0.190px;">Phí cần trả đối tác GH</div><div class="a t" style="left:379.10px;top:333.60px;font-size:10px;font-weight:400;color:#0f1824;-webkit-text-stroke:0.45px #0f1824;letter-spacing:0.478px;">Mã hóa đơn</div><div class="a t" style="left:541.60px;top:333.60px;font-size:10px;font-weight:400;color:#0f1824;-webkit-text-stroke:0.45px #0f1824;letter-spacing:0.422px;">Mã vận đơn</div><div class="a t" style="left:705.60px;top:333.60px;font-size:10px;font-weight:400;color:#0f1824;-webkit-text-stroke:0.45px #0f1824;letter-spacing:0.225px;">Thời gian</div><div class="a t" style="left:905.60px;top:333.60px;font-size:10px;font-weight:400;color:#0f1824;-webkit-text-stroke:0.45px #0f1824;letter-spacing:0.267px;">Giá trị hợp đồng</div><div class="a t" style="left:1028.70px;top:333.60px;font-size:10px;font-weight:400;color:#0f1824;-webkit-text-stroke:0.45px #0f1824;letter-spacing:0.306px;">Còn cần thu (COD)</div><div class="a t" style="left:1193.30px;top:333.60px;font-size:10px;font-weight:400;color:#0f1824;-webkit-text-stroke:0.45px #0f1824;letter-spacing:0.209px;">Phí trả ĐTGH</div><div class="a t" style="left:1273.50px;top:333.60px;font-size:10px;font-weight:400;color:#0f1824;-webkit-text-stroke:0.45px #0f1824;letter-spacing:0.422px;">Trạng thái</div><div class="a t" style="left:937.00px;top:365.00px;font-size:12px;font-weight:400;color:#0f1824;letter-spacing:0.233px;">287,000</div><div class="a t" style="left:1073.60px;top:365.00px;font-size:12px;font-weight:400;color:#0f1824;letter-spacing:0.233px;">183,000</div><div class="a t" style="left:1216.80px;top:365.00px;font-size:12px;font-weight:400;color:#0f1824;letter-spacing:0.400px;">40,000</div><div class="a t" style="left:1282.00px;top:370.50px;font-size:12px;font-weight:400;color:#0f1824;letter-spacing:0.340px;">Nhiều trạng thái</div><div class="a t" style="left:379.10px;top:409.40px;font-size:12px;font-weight:400;color:#1c5ae8;letter-spacing:0.371px;">HD000031</div><div class="a t" style="left:704.60px;top:409.20px;font-size:12px;font-weight:400;color:#0f1824;letter-spacing:0.160px;">19/10/2025 18:22</div><div class="a t" style="left:936.60px;top:409.20px;font-size:12px;font-weight:400;color:#0f1824;letter-spacing:0.300px;">183,000</div><div class="a t" style="left:1073.60px;top:409.20px;font-size:12px;font-weight:400;color:#0f1824;letter-spacing:0.233px;">183,000</div><div class="a t" style="left:1215.80px;top:409.20px;font-size:12px;font-weight:400;color:#0f1824;letter-spacing:0.600px;">20,000</div><div class="a t" style="left:1275.40px;top:411.30px;font-size:10.5px;font-weight:400;color:#1238b0;letter-spacing:0.085px;">Đang giao hàng</div><div class="a t" style="left:379.10px;top:447.00px;font-size:12px;font-weight:400;color:#1c5ae8;letter-spacing:0.614px;">HD000030</div><div class="a t" style="left:704.60px;top:447.00px;font-size:12px;font-weight:400;color:#0f1824;letter-spacing:0.160px;">19/10/2025 18:20</div><div class="a t" style="left:936.60px;top:447.00px;font-size:12px;font-weight:400;color:#0f1824;letter-spacing:0.300px;">104,000</div><div class="a t" style="left:1112.00px;top:447.00px;font-size:12px;font-weight:400;color:#0f1824;">0</div><div class="a t" style="left:1215.80px;top:447.00px;font-size:12px;font-weight:400;color:#0f1824;letter-spacing:0.600px;">20,000</div><div class="a t" style="left:1275.40px;top:449.00px;font-size:10.5px;font-weight:400;color:#1238b0;letter-spacing:0.085px;">Đang giao hàng</div><div class="a t" style="left:402.00px;top:511.40px;font-size:12.5px;font-weight:400;color:#111827;-webkit-text-stroke:0.45px #111827;letter-spacing:0.250px;">Xuất file</div><div class="a t" style="left:1209.30px;top:511.20px;font-size:12px;font-weight:400;color:#fff;-webkit-text-stroke:0.45px #fff;letter-spacing:0.335px;">Cập nhật giao hàng</div><div class="a t" style="left:351.40px;top:735.50px;font-size:10px;font-weight:400;color:#0f1824;letter-spacing:0.471px;">Hiển thị</div><div class="a t" style="left:397.00px;top:735.20px;font-size:10px;font-weight:400;color:#0f1824;letter-spacing:0.450px;">15 dòng</div><div class="a t" style="left:1514.50px;top:736.80px;font-size:12.5px;font-weight:400;color:#fff;-webkit-text-stroke:0.45px #fff;letter-spacing:0.150px;">1900 6522</div>
<div class="ov"></div>
<div class="top">
<div class="a" style="left:437.4px;top:278.2px;width:122.6px;height:35.8px;background:#fff;box-shadow:0 0 1px rgba(255,255,255,.6)"></div><div class="a" style="left:437.4px;top:309.2px;width:122.6px;height:1px;background:#eceef1"></div><div class="a" style="left:451.7px;top:308.3px;width:97.6px;height:1.8px;background:#0a4dff"></div><div class="a" style="left:1331px;top:495px;width:116px;height:42px;background:#fff"></div><div class="a" style="left:1337px;top:503px;width:103px;height:26.9px;border:1px solid #d3d8e0;border-radius:6px"></div><svg class="a" style="left:1347px;top:509.5px;" width="14" height="14" viewBox="0 0 14 14" fill="none"><circle cx="7" cy="7" r="6.1" stroke="#1a1f2b" stroke-width="1.3"/><path d="M8.9,4.9 C8.6,4.2 7.9,3.8 7,3.8 C5.9,3.8 5.1,4.4 5.1,5.3 C5.1,7.4 9,6.4 9,8.6 C9,9.5 8.1,10.1 7,10.1 C6,10.1 5.3,9.7 5,8.9 M7,2.8 L7,3.8 M7,10.1 L7,11.2" stroke="#1a1f2b" stroke-width="1.2" fill="none"/></svg>
<div class="a t" style="left:450.70px;top:288.20px;font-size:12px;font-weight:400;color:#1f5cff;letter-spacing:0.219px;">Lịch sử giao hàng</div><div class="a t" style="left:1366.00px;top:510.90px;font-size:12px;font-weight:400;color:#1a1f2b;letter-spacing:0.300px;-webkit-text-stroke:0.25px #1a1f2b;">Thanh toán</div>
</div>
</body></html>
